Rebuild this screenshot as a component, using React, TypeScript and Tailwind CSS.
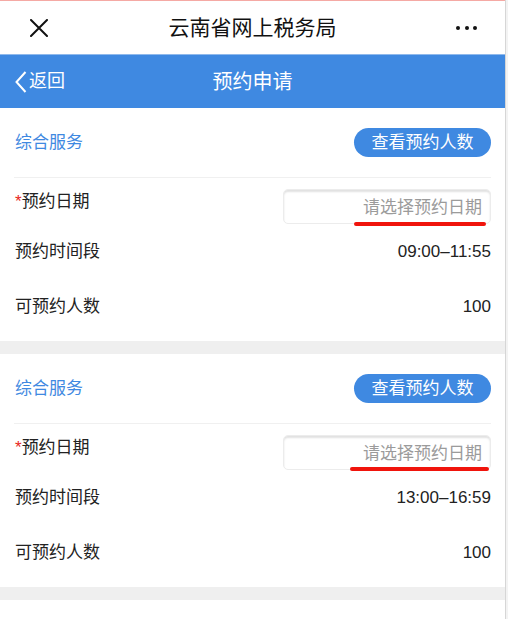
import React from "react";

const cjk = { fontFamily: '"Liberation Sans", "Noto Sans CJK SC", sans-serif' };

interface Slot {
  time: string;
  count: string;
  mark: { left: number; width: number; top: number };
}

const slots: Slot[] = [
  { time: "09:00–11:55", count: "100", mark: { left: 70, width: 132, top: 32 } },
  { time: "13:00–16:59", count: "100", mark: { left: 66, width: 139, top: 31 } },
];

function CloseIcon() {
  return (
    <svg width="18" height="18" viewBox="0 0 18 18" className="shrink-0">
      <path d="M1 1 L17 17 M17 1 L1 17" stroke="#111" strokeWidth="2" strokeLinecap="round" />
    </svg>
  );
}

function SlotCard({ slot }: { slot: Slot }) {
  return (
    <section className="bg-white px-[14px] pt-5 pb-[7px]">
      {/* 标题行 */}
      <div className="flex items-center justify-between h-[29px] pl-px">
        <span className="text-[17px] text-[#3f89e1] leading-none">综合服务</span>
        <button className="h-[29px] w-[137px] rounded-full bg-[#3f89e1] text-white text-[17px] leading-none">
          查看预约人数
        </button>
      </div>
      <div className="mt-5 h-px bg-[#f0f0f0]" />

      {/* 预约日期 */}
      <div className="flex items-start justify-between pt-[11px]">
        <span className="text-[17px] leading-6 text-[#222] mt-px pl-px">
          <span className="text-[#e8271e]">*</span>预约日期
        </span>
        <div className="relative w-[208px] h-[35px] rounded-[5px] border border-[#ececec] bg-white shadow-[inset_0_2px_2px_rgba(0,0,0,0.12)] flex items-center justify-end pr-2">
          <span className="text-[17px] text-[#9b9b9b] leading-none mt-px">请选择预约日期</span>
          <div
            className="absolute h-[4px] rounded-full bg-[#f0140c]"
            style={{ left: slot.mark.left, width: slot.mark.width, top: slot.mark.top }}
          />
        </div>
      </div>

      {/* 时间段 / 人数 */}
      <div className="flex items-center justify-between h-[55px] text-[17px] text-[#222] pl-px">
        <span>预约时间段</span>
        <span>{slot.time}</span>
      </div>
      <div className="flex items-center justify-between h-[55px] text-[17px] text-[#222] pl-px">
        <span>可预约人数</span>
        <span>{slot.count}</span>
      </div>
    </section>
  );
}

export default function App() {
  return (
    <div className="flex w-[508px] h-[619px] overflow-hidden bg-white" style={cjk}>
      <div className="w-[505px] shrink-0 flex flex-col">
        {/* 顶部导航 */}
        <header className="h-[54px] border-t border-[#f5a9a4] bg-white flex items-center justify-between px-[30px] relative">
          <CloseIcon />
          <h1 className="absolute left-0 right-0 text-center text-[21px] text-[#111] pointer-events-none">
            云南省网上税务局
          </h1>
          <div className="flex items-center gap-[4.5px] mr-[-2px]">
            <span className="w-[4px] h-[4px] rounded-full bg-[#111]" />
            <span className="w-[4px] h-[4px] rounded-full bg-[#111]" />
            <span className="w-[4px] h-[4px] rounded-full bg-[#111]" />
          </div>
        </header>

        {/* 蓝色标题栏 */}
        <div className="h-[54px] bg-[#3f89e1] border-t border-[#8fb9ec] relative flex items-center">
          <div className="flex items-center pl-[15px] text-white">
            <svg width="12" height="22" viewBox="0 0 12 22">
              <path d="M10.5 1 L1.5 11 L10.5 21" fill="none" stroke="#fff" strokeWidth="2" />
            </svg>
            <span className="text-[18px] ml-[2px]">返回</span>
          </div>
          <h2 className="absolute left-0 right-0 text-center text-[20px] text-white pointer-events-none">
            预约申请
          </h2>
        </div>

        {slots.map((s, i) => (
          <React.Fragment key={i}>
            <SlotCard slot={s} />
            <div className="h-[13px] bg-[#efefef]" />
          </React.Fragment>
        ))}
        <div className="flex-1 bg-white" />
      </div>

      {/* 右侧滚动条 */}
      <div className="flex-1 border-l border-[#d6d6d6] bg-[#f3f3f3]" />
    </div>
  );
}
